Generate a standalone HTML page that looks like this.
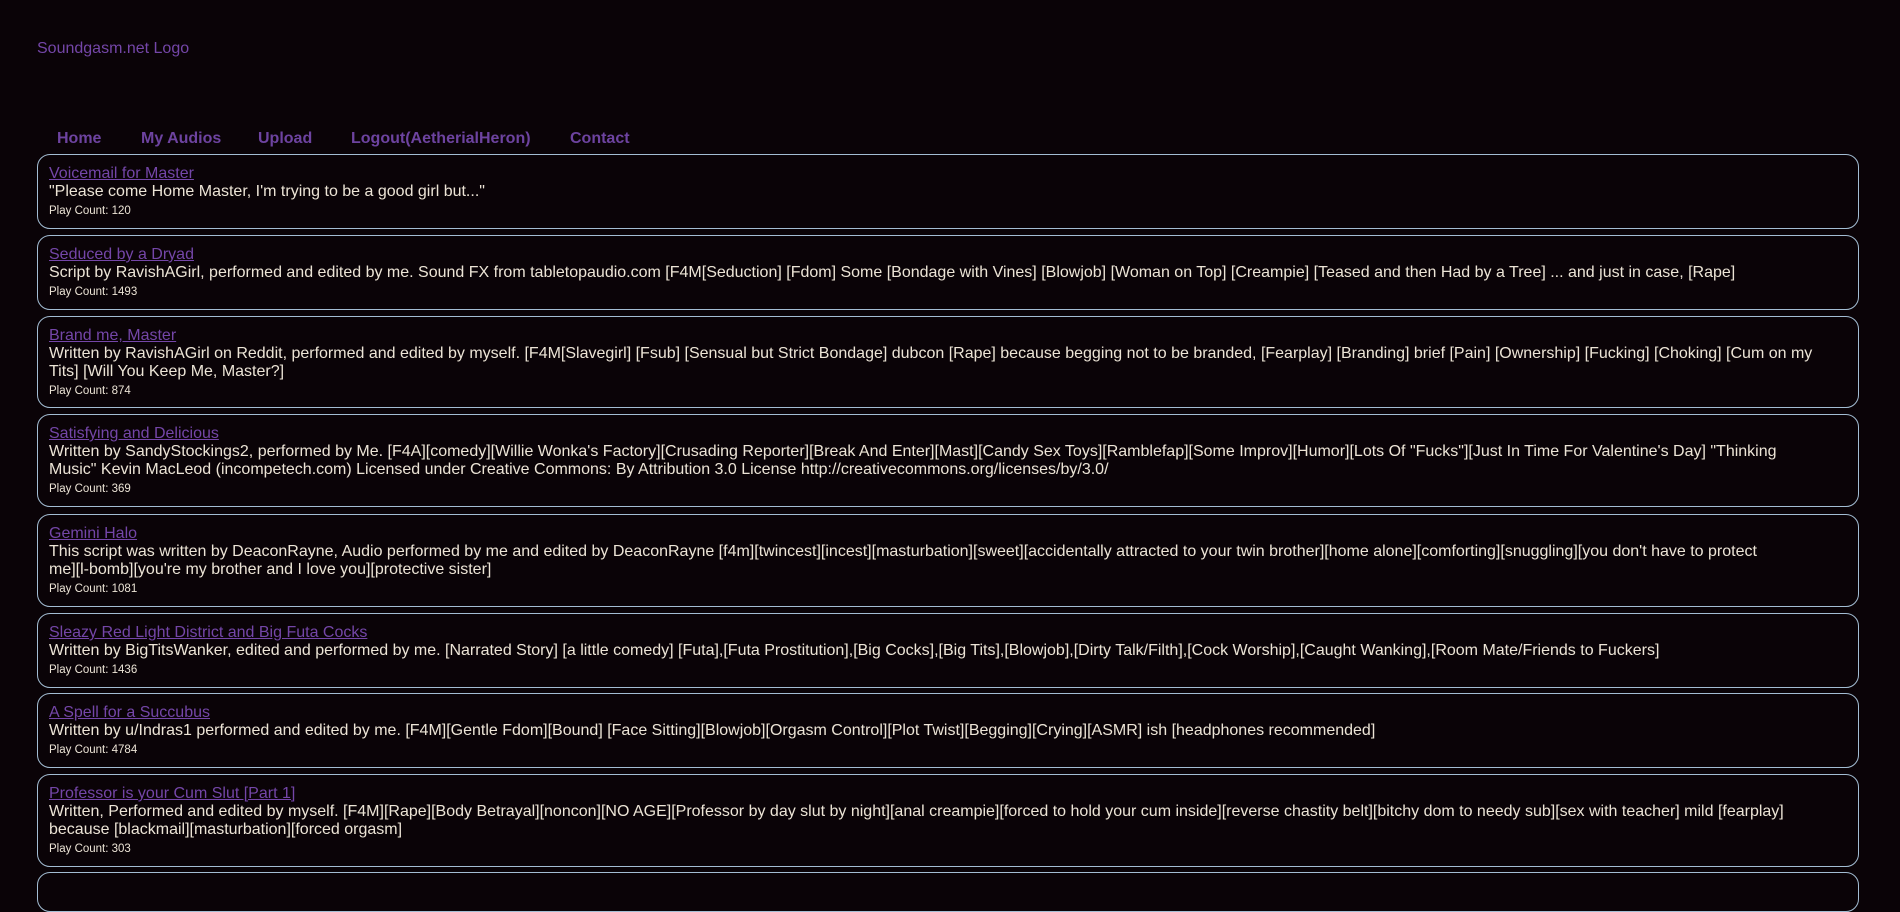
<!DOCTYPE html>
<html><head><meta charset="utf-8"><style>
*{margin:0;padding:0;box-sizing:border-box}
body{width:1900px;height:874px;overflow:hidden;background:#0a0307;font-family:"Liberation Sans",sans-serif;color:#ece4d6;position:relative}
.logo{position:absolute;left:37px;top:40px;font-size:16px;color:#7446a8}
.nav a{position:absolute;top:130px;font-size:16px;font-weight:bold;color:#6d43a0;text-decoration:none}
.card{position:absolute;left:37px;width:1822px;border:1px solid #a3bdd3;border-radius:13px;padding:9px 11px 0 11px}
.card a{display:block;color:#7446a8;font-size:16px;line-height:19px;text-decoration:underline}
.card p{font-size:16px;line-height:18px;white-space:nowrap}
.card small{display:block;font-size:11.5px;line-height:18px;margin-top:1px}
</style></head><body>
<div class="logo">Soundgasm.net Logo</div>
<div class="nav">
<a style="left:57px">Home</a><a style="left:141px">My Audios</a><a style="left:258px">Upload</a><a style="left:351px">Logout(AetherialHeron)</a><a style="left:570px">Contact</a>
</div>
<div class="card" style="top:154px;height:75px"><a>Voicemail for Master</a><p>"Please come Home Master, I'm trying to be a good girl but..."</p><small>Play Count: 120</small></div>
<div class="card" style="top:235px;height:75px"><a>Seduced by a Dryad</a><p>Script by RavishAGirl, performed and edited by me. Sound FX from tabletopaudio.com [F4M[Seduction] [Fdom] Some [Bondage with Vines] [Blowjob] [Woman on Top] [Creampie] [Teased and then Had by a Tree] ... and just in case, [Rape]</p><small>Play Count: 1493</small></div>
<div class="card" style="top:316px;height:92px"><a>Brand me, Master</a><p>Written by RavishAGirl on Reddit, performed and edited by myself. [F4M[Slavegirl] [Fsub] [Sensual but Strict Bondage] dubcon [Rape] because begging not to be branded, [Fearplay] [Branding] brief [Pain] [Ownership] [Fucking] [Choking] [Cum on my<br>Tits] [Will You Keep Me, Master?]</p><small>Play Count: 874</small></div>
<div class="card" style="top:414px;height:93px"><a>Satisfying and Delicious</a><p>Written by SandyStockings2, performed by Me. [F4A][comedy][Willie Wonka's Factory][Crusading Reporter][Break And Enter][Mast][Candy Sex Toys][Ramblefap][Some Improv][Humor][Lots Of "Fucks"][Just In Time For Valentine's Day] "Thinking<br>Music" Kevin MacLeod (incompetech.com) Licensed under Creative Commons: By Attribution 3.0 License http://creativecommons.org/licenses/by/3.0/</p><small>Play Count: 369</small></div>
<div class="card" style="top:514px;height:93px"><a>Gemini Halo</a><p>This script was written by DeaconRayne, Audio performed by me and edited by DeaconRayne [f4m][twincest][incest][masturbation][sweet][accidentally attracted to your twin brother][home alone][comforting][snuggling][you don't have to protect<br>me][l-bomb][you're my brother and I love you][protective sister]</p><small>Play Count: 1081</small></div>
<div class="card" style="top:613px;height:75px"><a>Sleazy Red Light District and Big Futa Cocks</a><p>Written by BigTitsWanker, edited and performed by me. [Narrated Story] [a little comedy] [Futa],[Futa Prostitution],[Big Cocks],[Big Tits],[Blowjob],[Dirty Talk/Filth],[Cock Worship],[Caught Wanking],[Room Mate/Friends to Fuckers]</p><small>Play Count: 1436</small></div>
<div class="card" style="top:693px;height:75px"><a>A Spell for a Succubus</a><p>Written by u/Indras1 performed and edited by me. [F4M][Gentle Fdom][Bound] [Face Sitting][Blowjob][Orgasm Control][Plot Twist][Begging][Crying][ASMR] ish [headphones recommended]</p><small>Play Count: 4784</small></div>
<div class="card" style="top:774px;height:93px"><a>Professor is your Cum Slut [Part 1]</a><p>Written, Performed and edited by myself. [F4M][Rape][Body Betrayal][noncon][NO AGE][Professor by day slut by night][anal creampie][forced to hold your cum inside][reverse chastity belt][bitchy dom to needy sub][sex with teacher] mild [fearplay]<br>because [blackmail][masturbation][forced orgasm]</p><small>Play Count: 303</small></div>
<div class="card" style="top:872px;height:40px"></div>
</body></html>
